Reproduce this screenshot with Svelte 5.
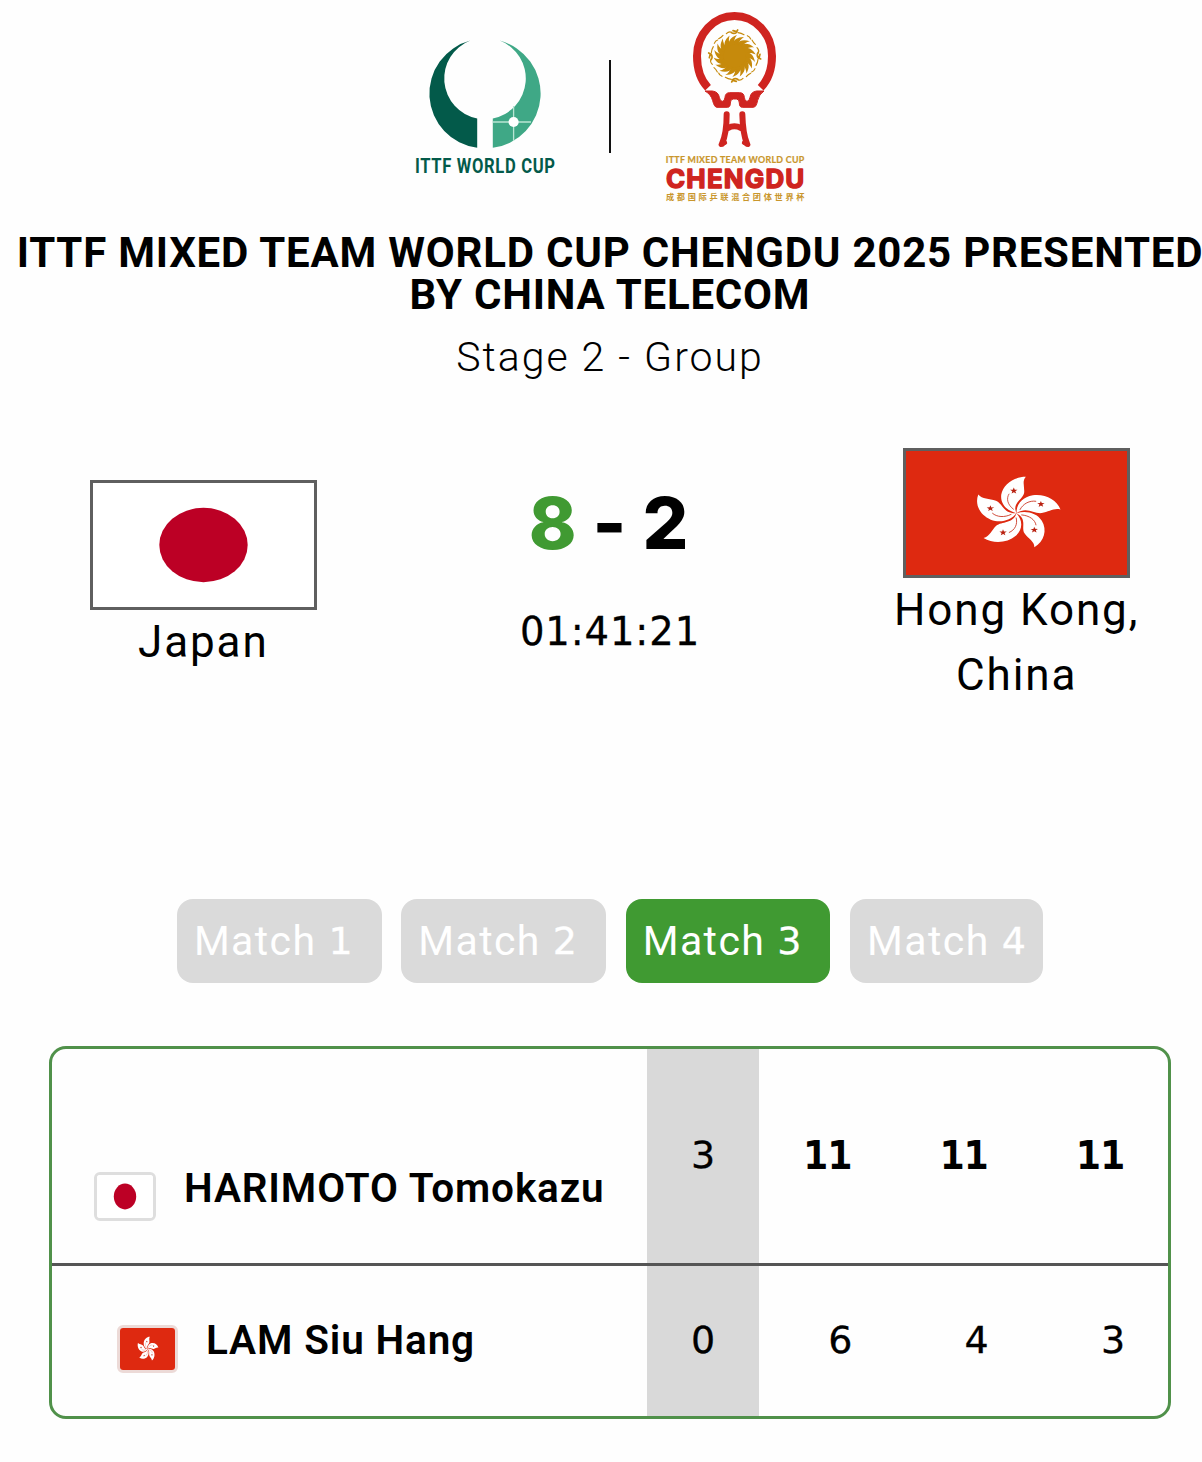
<script lang="ts">
	type Row = { flag: 'jp' | 'hk'; name: string; total: number; games: number[]; winner: boolean };

	const matches = [1, 2, 3, 4];
	let active = $state(3);

	const rows: Row[] = [
		{ flag: 'jp', name: 'HARIMOTO Tomokazu', total: 3, games: [11, 11, 11], winner: true },
		{ flag: 'hk', name: 'LAM Siu Hang', total: 0, games: [6, 4, 3], winner: false }
	];

	const petals = [0, 72, 144, 216, 288];
	const rays = Array.from({ length: 18 }, (_, i) => i * 20);
	const birds = [0, 90, 180, 270];
</script>

{#snippet flagArt(code: string)}
	<svg class="flag-art" viewBox="0 0 90 60" preserveAspectRatio="none" aria-hidden="true">
		{#if code === 'jp'}
			<rect width="90" height="60" fill="#fff" />
			<circle cx="45" cy="30" r="18" fill="#bc0025" />
		{:else}
			<rect width="90" height="60" fill="#de2910" />
			<g transform="translate(45 30.1)">
				{#each petals as angle}
					<g transform="rotate({angle})">
						<path d="M0 0C-4-1.2-6.7-4.6-6.2-9C-5.4-14-1.2-17.6 3.8-17.6C2.1-15.4 3.4-12.8 3.1-9.8C2.6-6.6-2-5 0 0Z" fill="#fff" />
						<path d="M-3-9.4C-4.3-7-3.6-4-1.1-1.8" fill="none" stroke="#c9321f" stroke-width="0.35" />
						<path d="M-1.1-12.4l.4 1.1h1.1l-.9.7.4 1.1-1-.7-.9.7.3-1.1-.9-.7h1.1z" fill="#b8200f" />
					</g>
				{/each}
			</g>
		{/if}
	</svg>
{/snippet}

<div class="page">
	<header class="logos">
		<svg class="logo" viewBox="414 0 142 213" role="img" aria-label="ITTF World Cup">
			<path d="M470.3 40.6A54.7 54.7 0 0 0 477.2 147.8V118.4A40.6 40.6 0 0 1 470.3 40.6Z" fill="#035a4a" />
			<path d="M499.7 40.6A54.7 54.7 0 0 1 492.8 147.8V118.4A40.6 40.6 0 0 0 499.7 40.6Z" fill="#3fa886" />
			<path d="M492.8 122H531M513.6 106V141" stroke="#b9e5d3" stroke-width="1.3" />
			<circle cx="513.6" cy="122" r="5.1" fill="#fff" />
			<text class="cup-text" x="415" y="173" textLength="140.6" lengthAdjust="spacingAndGlyphs">ITTF WORLD CUP</text>
		</svg>

		<div class="separator"></div>

		<svg class="logo" viewBox="664 0 142 213" role="img" aria-label="ITTF Mixed Team World Cup Chengdu">
			<g transform="translate(640 0) scale(.33333)">
				<path d="M204 263C180 238 171 204 171 168A112.5 120 0 0 1 396 168C396 204 386 238 362 263" fill="none" stroke="#cf2420" stroke-width="24" />
				<path d="M195 273H217Q235 275 238 292Q240 304 247 304Q254 304 255 292Q256 278 269 278H299Q312 278 313 292Q314 304 321 304Q328 304 330 292Q333 275 350 273H372Q357 283 353 301Q349 322 340 322H307Q298 322 298 309Q298 297 289 297H280Q271 297 271 309Q271 322 263 322H231Q223 322 218 302Q213 283 195 273Z" fill="#cf2420" stroke="#cf2420" stroke-width="3" />
				<g fill="none" stroke="#cf2420" stroke-width="18" stroke-linecap="round">
					<path d="M260 343C260 380 258 405 246 431M307 343C308 380 310 405 321 431" />
					<path d="M242 434L255 428M325 434L312 428" stroke-width="13" />
					<path d="M264 384Q283 374 303 384" stroke-width="18" />
				</g>
				<g transform="translate(284 168)">
					<circle r="39" fill="#c68a0c" />
					{#each rays as angle}
						<path transform="rotate({angle})" d="M-6-36C-3-48 7-57 28-57C18-51 13-43 10-32Z" fill="#c68a0c" />
					{/each}
					{#each birds as angle}
						<g transform="rotate({angle})" fill="none" stroke="#c68a0c" stroke-linecap="round">
							<path d="M-25-67Q-17-75-9-71M10-70Q20-69 28-64M38-61Q46-58 48-51M-48-52Q-40-56-35-62" stroke-width="3.4" />
							<path d="M-10-70Q-2-65 6-71M-5-76L6-73L9-78" stroke-width="5" />
						</g>
					{/each}
				</g>
			</g>
			<text class="event-text" x="665.8" y="163.4" textLength="138.8" lengthAdjust="spacingAndGlyphs">ITTF MIXED TEAM WORLD CUP</text>
			<text class="city-text" x="666" y="187.8" textLength="139.5" lengthAdjust="spacingAndGlyphs">CHENGDU</text>
			<text class="cn-text" x="666" y="200" textLength="138.5">成都国际乒联混合团体世界杯</text>
		</svg>
	</header>

	<h1>ITTF MIXED TEAM WORLD CUP CHENGDU 2025 PRESENTED<br />BY CHINA TELECOM</h1>
	<p class="stage">Stage 2 - Group</p>

	<section class="teams">
		<div class="team">
			<div class="flag">{@render flagArt('jp')}</div>
			<span class="team-name">Japan</span>
		</div>
		<div class="summary">
			<div class="score"><span class="leading">8</span><span class="dash">-</span><span>2</span></div>
			<div class="time">01:41:21</div>
		</div>
		<div class="team">
			<div class="flag">{@render flagArt('hk')}</div>
			<span class="team-name">Hong Kong,<br />China</span>
		</div>
	</section>

	<nav class="tabs">
		{#each matches as n}
			<button class="tab" class:active={active === n} onclick={() => (active = n)}>
				<span class="tab-word">Match</span><span class="tab-num">{n}</span>
			</button>
		{/each}
	</nav>

	<section class="card">
		{#each rows as row}
			<div class="row {row.flag}">
				<div class="player">
					<div class="small-flag">{@render flagArt(row.flag)}</div>
					<span class="player-name">{row.name}</span>
				</div>
				<div class="total">{row.total}</div>
				{#each row.games as game}
					<div class="game" class:winner={row.winner}>{game}</div>
				{/each}
			</div>
		{/each}
	</section>
</div>

<style>
	:global(body) {
		background: #fefefe;
		overflow: hidden;
	}

	.page {
		width: 1220px;
		height: 1462px;
		font-family: Roboto, 'Liberation Sans', sans-serif;
		color: #000;
	}

	.logos {
		display: flex;
		justify-content: center;
		align-items: center;
		gap: 53px;
		height: 213px;
	}

	.logo {
		width: 142px;
		height: 213px;
		display: block;
	}

	.separator {
		width: 2px;
		height: 93px;
		background: #111;
	}

	.cup-text {
		font: 700 20.6px Roboto, sans-serif;
		letter-spacing: 0.8px;
		fill: #035a4a;
	}

	.event-text {
		font: 700 8.6px Lato, sans-serif;
		letter-spacing: 0.3px;
		fill: #c9962c;
		stroke: #c9962c;
		stroke-width: 0.2;
	}

	.city-text {
		font: 700 26px Inter, sans-serif;
		letter-spacing: 1.2px;
		fill: #cf2420;
		stroke: #cf2420;
		stroke-width: 1.4;
		stroke-linejoin: round;
	}

	.cn-text {
		font: 700 8.2px 'Noto Sans CJK SC', sans-serif;
		fill: #c9962c;
	}

	h1 {
		margin: 19px 0 0;
		font-size: 42px;
		line-height: 42px;
		font-weight: 700;
		text-align: center;
		white-space: nowrap;
		letter-spacing: 0.78px;
	}

	.stage {
		margin: 11px 0 0;
		font-size: 41px;
		line-height: 60px;
		font-weight: 300;
		text-align: center;
		letter-spacing: 2px;
	}

	.teams {
		display: grid;
		grid-template-columns: repeat(3, 1fr);
		align-items: center;
		height: 259px;
		margin-top: 61px;
	}

	.team {
		display: flex;
		flex-direction: column;
		align-items: center;
	}

	.flag {
		box-sizing: border-box;
		width: 227px;
		height: 130px;
		border: 3px solid #5f5f5f;
	}

	.flag-art {
		display: block;
		width: 100%;
		height: 100%;
	}

	.team-name {
		font-size: 44px;
		line-height: 64.5px;
		letter-spacing: 1.9px;
		text-align: center;
	}

	.summary {
		display: flex;
		flex-direction: column;
		align-items: center;
		gap: 31px;
		padding-bottom: 11px;
	}

	.score {
		display: flex;
		gap: 16px;
		padding-right: 3px;
		font: 800 72px/88px Inter, sans-serif;
	}

	.leading {
		color: #409a32;
	}

	.time {
		font: 38.5px/68px 'DejaVu Sans', sans-serif;
		letter-spacing: 0.9px;
		-webkit-text-stroke: 0.3px #000;
	}

	.tabs {
		display: flex;
		justify-content: center;
		gap: 19.6px;
		margin-top: 192px;
	}

	.tab {
		display: flex;
		align-items: center;
		box-sizing: border-box;
		width: 204.8px;
		height: 84px;
		padding: 0 17px;
		border: 0;
		border-radius: 16px;
		background: #dadada;
		color: #fff;
		font: 41px/84px Roboto, sans-serif;
		cursor: pointer;
	}

	.tab:last-child {
		width: 193px;
	}

	.tab.active {
		background: #409a32;
	}

	.tab-word {
		letter-spacing: 1.4px;
	}

	.tab-num {
		margin-left: 12px;
		font: 38px/84px 'DejaVu Sans', sans-serif;
		-webkit-text-stroke: 0.3px #fff;
	}

	.card {
		box-sizing: border-box;
		width: 1122px;
		height: 373px;
		margin: 63px auto 0;
		border: 3px solid #50914a;
		border-radius: 17px;
		overflow: hidden;
	}

	.row {
		display: grid;
		grid-template-columns: 595px 112px repeat(3, 136.4px);
		height: 150px;
	}

	.row.jp {
		height: 214px;
		border-bottom: 3px solid #555;
	}

	.player {
		display: flex;
		align-items: center;
		padding: 0 0 0 65px;
		gap: 28px;
	}

	.jp .player {
		padding: 65px 0 0 42px;
	}

	.small-flag {
		box-sizing: border-box;
		width: 62px;
		height: 49px;
		margin-top: 15px;
		border: 3px solid #dedede;
		border-radius: 6px;
		overflow: hidden;
	}

	.hk .small-flag {
		width: 61px;
		height: 48px;
		border-color: #ecdad7;
	}

	.player-name {
		padding-bottom: 2px;
		font-size: 40.5px;
		line-height: 60px;
		font-weight: 600;
		letter-spacing: 0.85px;
		white-space: nowrap;
	}

	.total,
	.game {
		display: flex;
		align-items: center;
		font-family: 'DejaVu Sans', sans-serif;
		font-size: 38px;
		padding-bottom: 2px;
		-webkit-text-stroke: 0.3px #000;
	}

	.total {
		justify-content: center;
		background: #d9d9d9;
	}

	.game {
		justify-content: flex-end;
		padding-right: 43px;
	}

	.winner {
		-webkit-text-stroke: 2.2px #000;
	}
</style>
